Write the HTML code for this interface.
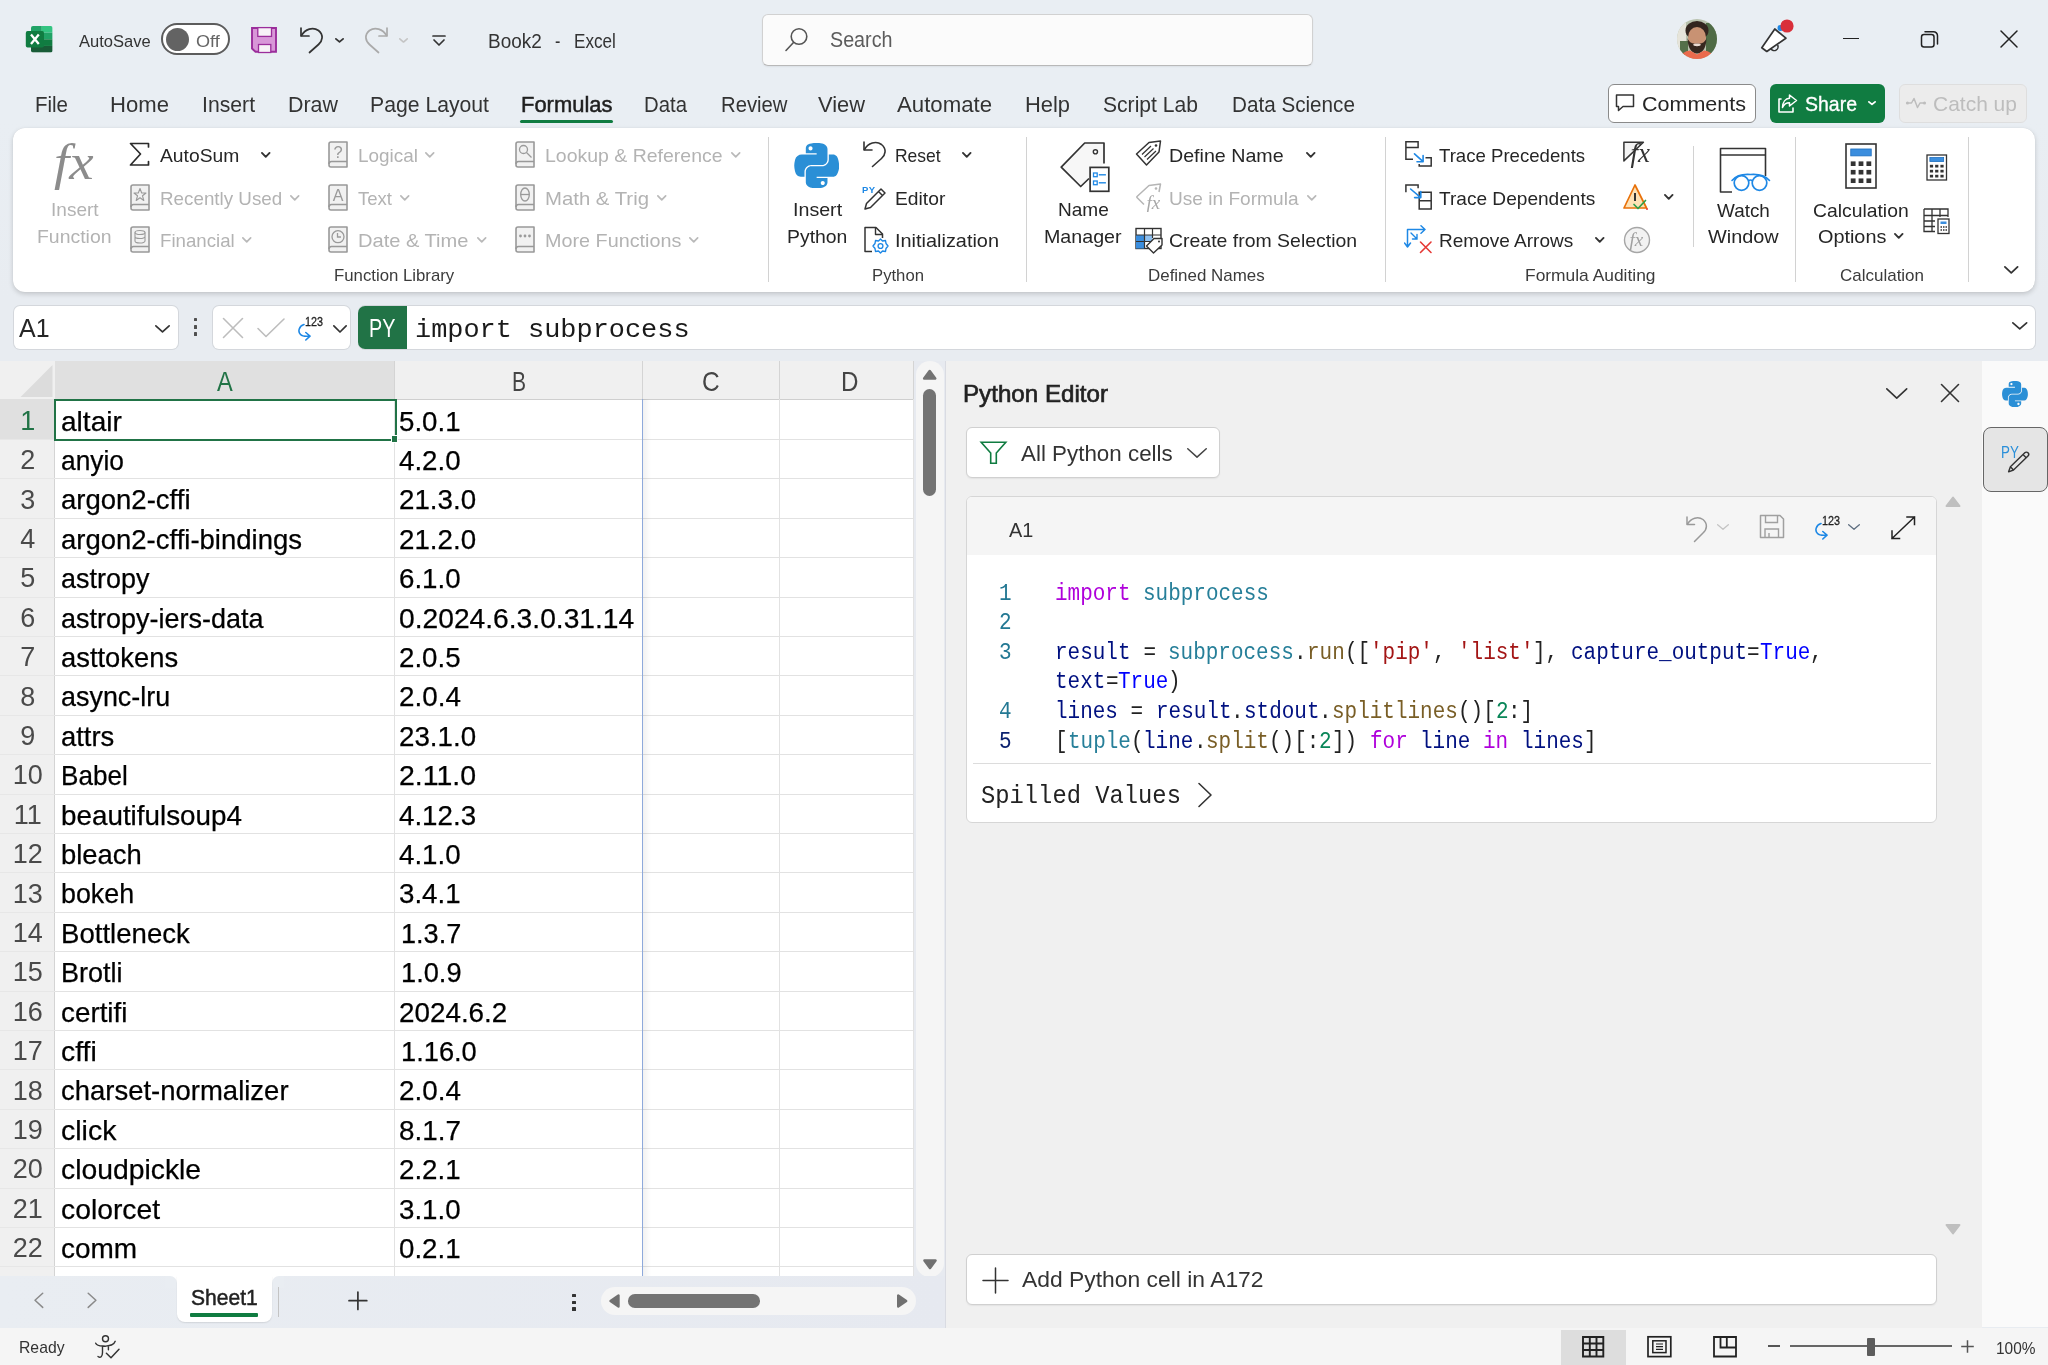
<!DOCTYPE html>
<html lang="en"><head><meta charset="utf-8"><title>Book2 - Excel</title>
<style>
html,body{margin:0;padding:0;}
body{width:2048px;height:1365px;overflow:hidden;position:relative;background:linear-gradient(to bottom,#e9eef3 0,#e9eef3 120px,#e8ecf1 300px,#e8ecf1 100%);font-family:"Liberation Sans",sans-serif;}
.b{position:absolute;box-sizing:border-box;display:block;}
.t{position:absolute;white-space:pre;line-height:1;transform-origin:0 0;display:block;}
</style></head><body><div class="b" style="left:0;top:0;width:2048px;height:1365px;will-change:transform;">
<svg class="b" style="left:25px;top:25px;" width="29" height="29" viewBox="0 0 29 29" fill="none"><defs><clipPath id="xl"><rect x="6" y="1" width="21.600" height="26.600" rx="2"/></clipPath></defs>
<g clip-path="url(#xl)"><rect x="6" y="1" width="10.800" height="6.650" fill="#21a366"/><rect x="16.800" y="1" width="10.800" height="6.650" fill="#33c481"/>
<rect x="6" y="7.650" width="10.800" height="6.650" fill="#107c41"/><rect x="16.800" y="7.650" width="10.800" height="6.650" fill="#21a366"/>
<rect x="6" y="14.300" width="10.800" height="6.650" fill="#185c37"/><rect x="16.800" y="14.300" width="10.800" height="6.650" fill="#107c41"/>
<rect x="6" y="20.950" width="21.600" height="6.650" fill="#185c37"/></g>
<rect x="0.800" y="6.100" width="18.200" height="16.400" rx="1.800" fill="#107c41"/>
<path d="M6 9.600 L13.800 19 M13.800 9.600 L6 19" stroke="#fff" stroke-width="2.300"/></svg>
<span class="t" style="left:79.00px;top:33.24px;font-size:17.2px;color:#333;transform:scaleX(0.9616);">AutoSave</span>
<div class="b" style="left:161px;top:23.2px;width:68.6px;height:31.8px;background:#fff;border:2px solid #5c5c5c;border-radius:16px;"></div>
<div class="b" style="left:165.8px;top:27.8px;width:23px;height:23px;background:#636363;border-radius:50%;"></div>
<span class="t" style="left:195.80px;top:33.24px;font-size:17.2px;color:#666;transform:scaleX(1.0527);">Off</span>
<svg class="b" style="left:250.2px;top:26.3px;" width="28" height="28" viewBox="0 0 28 28" fill="none"><path d="M2 2 H26 V25.800 H5.500 L2 22.500 Z" fill="#d897d8" stroke="#9b2d9b" stroke-width="1.900" stroke-linejoin="miter"/>
<rect x="7.800" y="1.600" width="13.700" height="8.800" fill="#f7f2f7" stroke="#9b2d9b" stroke-width="1.300"/>
<rect x="8.500" y="18.500" width="12.300" height="8" fill="#f7f2f7" stroke="#9b2d9b" stroke-width="1.300"/></svg>
<svg class="b" style="left:298px;top:25px;" width="28" height="30" viewBox="0 0 28 30" fill="none"><path d="M3 3 V11 H11" stroke="#333" stroke-width="1.700" stroke-linecap="round" stroke-linejoin="round"/>
<path d="M3.500 10.500 C7 4 15 1.500 20.500 5.500 C26 10 24.500 16 20.500 19.500 L11.500 27.500" stroke="#333" stroke-width="1.700" stroke-linecap="round" stroke-linejoin="round"/></svg>
<svg class="b" style="left:333px;top:35.5px;" width="13" height="9.0" viewBox="0 0 13 9.0" fill="none"><path d="M2.90 2.90 L6.50 5.92 L10.10 2.90" stroke="#333" stroke-width="1.8" stroke-linecap="round" stroke-linejoin="round"/></svg>
<svg class="b" style="left:362px;top:25px;" width="28" height="30" viewBox="0 0 28 30" fill="none"><path d="M25 3 V11 H17" stroke="#aaa" stroke-width="1.700" stroke-linecap="round" stroke-linejoin="round"/>
<path d="M24.500 10.500 C21 4 13 1.500 7.500 5.500 C2 10 3.500 16 7.500 19.500 L16.500 27.500" stroke="#aaa" stroke-width="1.700" stroke-linecap="round" stroke-linejoin="round"/></svg>
<svg class="b" style="left:397px;top:35.5px;" width="13" height="9.0" viewBox="0 0 13 9.0" fill="none"><path d="M2.80 2.80 L6.50 6.04 L10.20 2.80" stroke="#c4c4c4" stroke-width="1.6" stroke-linecap="round" stroke-linejoin="round"/></svg>
<svg class="b" style="left:430px;top:33px;" width="18" height="14" viewBox="0 0 18 14" fill="none"><path d="M3 3 H15" stroke="#333" stroke-width="1.700" stroke-linecap="round"/><path d="M4 7 L9 12 L14 7" stroke="#333" stroke-width="1.700" stroke-linecap="round" stroke-linejoin="round"/></svg>
<span class="t" style="left:488.00px;top:30.57px;font-size:20px;color:#333;transform:scaleX(0.9471);">Book2</span>
<span class="t" style="left:555.30px;top:30.57px;font-size:20px;color:#333;transform:scaleX(0.8060);">-</span>
<span class="t" style="left:574.30px;top:30.57px;font-size:20px;color:#333;transform:scaleX(0.8569);">Excel</span>
<div class="b" style="left:762px;top:14px;width:551px;height:52px;background:#fbfbfb;border:1px solid #d1d1d1;border-bottom-color:#b8b8b8;border-radius:6px;box-shadow:0 1px 2px rgba(0,0,0,.06);"></div>
<svg class="b" style="left:783px;top:25px;" width="28" height="28" viewBox="0 0 28 28" fill="none"><circle cx="16" cy="11.500" r="7.800" stroke="#555" stroke-width="1.600"/><path d="M10.500 17.500 L3 25.500" stroke="#555" stroke-width="1.600" stroke-linecap="round"/></svg>
<span class="t" style="left:830.00px;top:28.88px;font-size:22px;color:#5c5c5c;transform:scaleX(0.8962);">Search</span>
<svg class="b" style="left:1677px;top:19px;" width="40" height="40" viewBox="0 0 40 40" fill="none"><defs><clipPath id="av"><circle cx="20" cy="20" r="20"/></clipPath></defs>
<g clip-path="url(#av)"><rect width="40" height="40" fill="#b9c2ae"/>
<rect x="0" y="0" width="9" height="40" fill="#e6e4da"/><rect x="29" y="4" width="11" height="30" fill="#4f6b45"/><rect x="3" y="22" width="8" height="14" fill="#55704a"/>
<ellipse cx="20" cy="11.500" rx="11.500" ry="9.500" fill="#33251f"/>
<ellipse cx="20" cy="18.500" rx="9" ry="10.500" fill="#c89273"/>
<path d="M10.500 19 Q11 34 20 34.500 Q29 34 29.500 19 Q27.500 25.500 20 24.500 Q12.500 25.500 10.500 19Z" fill="#37281f"/>
<ellipse cx="20" cy="25.800" rx="3.800" ry="1.400" fill="#eadbd2"/>
<path d="M2 40 Q5 32 13 31.500 L20 35.500 L27 31.500 Q35 32 38 40Z" fill="#ea6a4c"/></g></svg>
<svg class="b" style="left:1758px;top:18px;" width="38" height="38" viewBox="0 0 38 38" fill="none"><path d="M16.800 11 L27.900 20.200 L8.800 33.500 L3.800 29.700 Z" fill="#fff" stroke="#333" stroke-width="1.700" stroke-linejoin="round"/>
<path d="M13 30.600 A3.600 3.600 0 0 0 19.600 27" stroke="#333" stroke-width="1.600"/>
<circle cx="22.500" cy="10" r="3" fill="#1e88e5"/><circle cx="29" cy="8" r="6.600" fill="#d92f3a"/></svg>
<div class="b" style="left:1843px;top:37.5px;width:16px;height:1.6px;background:#222;"></div>
<svg class="b" style="left:1920px;top:30px;" width="20" height="19" viewBox="0 0 20 19" fill="none"><rect x="1.500" y="4.500" width="12.500" height="12.500" rx="2.500" stroke="#222" stroke-width="1.500"/><path d="M5 1.700 H13.500 A4 4 0 0 1 17.500 5.700 V14" stroke="#222" stroke-width="1.500" stroke-linecap="round"/></svg>
<svg class="b" style="left:1999px;top:29px;" width="20" height="20" viewBox="0 0 20 20" fill="none"><path d="M2 2 L18 18 M18 2 L2 18" stroke="#222" stroke-width="1.500" stroke-linecap="round"/></svg>
<span class="t" style="left:35.00px;top:94.05px;font-size:21.8px;color:#333;transform:scaleX(0.9402);">File</span>
<span class="t" style="left:110.00px;top:94.05px;font-size:21.8px;color:#333;transform:scaleX(1.0136);">Home</span>
<span class="t" style="left:202.00px;top:94.05px;font-size:21.8px;color:#333;transform:scaleX(0.9725);">Insert</span>
<span class="t" style="left:288.00px;top:94.05px;font-size:21.8px;color:#333;transform:scaleX(0.9823);">Draw</span>
<span class="t" style="left:370.00px;top:94.05px;font-size:21.8px;color:#333;transform:scaleX(0.9722);">Page Layout</span>
<span class="t" style="left:644.00px;top:94.05px;font-size:21.8px;color:#333;transform:scaleX(0.9326);">Data</span>
<span class="t" style="left:720.50px;top:94.05px;font-size:21.8px;color:#333;transform:scaleX(0.9300);">Review</span>
<span class="t" style="left:818.00px;top:94.05px;font-size:21.8px;color:#333;transform:scaleX(1.0028);">View</span>
<span class="t" style="left:897.00px;top:94.05px;font-size:21.8px;color:#333;transform:scaleX(1.0182);">Automate</span>
<span class="t" style="left:1025.00px;top:94.05px;font-size:21.8px;color:#333;transform:scaleX(1.0045);">Help</span>
<span class="t" style="left:1103.00px;top:94.05px;font-size:21.8px;color:#333;transform:scaleX(0.9673);">Script Lab</span>
<span class="t" style="left:1232.00px;top:94.05px;font-size:21.8px;color:#333;transform:scaleX(0.9483);">Data Science</span>
<span class="t" style="left:521.00px;top:94.05px;font-size:21.8px;color:#1f1f1f;transform:scaleX(1.0065);-webkit-text-stroke:0.5px #1f1f1f;">Formulas</span>
<div class="b" style="left:520px;top:119.5px;width:93px;height:3.4px;background:#107c41;border-radius:2px;"></div>
<div class="b" style="left:1608px;top:84px;width:148px;height:38.5px;background:#fff;border:1px solid #8a8a8a;border-radius:6px;"></div>
<svg class="b" style="left:1614px;top:92px;" width="22" height="22" viewBox="0 0 22 22" fill="none"><path d="M2.500 3 H19.500 V14.500 H9 L4.500 18.500 V14.500 H2.500 Z" stroke="#333" stroke-width="1.500" stroke-linejoin="round"/></svg>
<span class="t" style="left:1642.00px;top:93.02px;font-size:21px;color:#262626;transform:scaleX(1.0243);">Comments</span>
<div class="b" style="left:1770px;top:84px;width:115px;height:39px;background:#107c41;border-radius:6px;"></div>
<svg class="b" style="left:1776px;top:92px;" width="23" height="23" viewBox="0 0 23 23" fill="none"><path d="M5 7 H3 V20 H17 V16" stroke="#fff" stroke-width="1.600" stroke-linejoin="round" stroke-linecap="round"/>
<path d="M13.500 3 L20.500 8.500 L13.500 14 V10.800 C10 10.800 7.800 12.500 6.500 15.500 C6.700 10 9.500 6.500 13.500 6.300 Z" stroke="#fff" stroke-width="1.500" stroke-linejoin="round"/></svg>
<span class="t" style="left:1805.00px;top:93.02px;font-size:21px;color:#fff;transform:scaleX(0.9274);-webkit-text-stroke:0.35px #fff;">Share</span>
<svg class="b" style="left:1866.3px;top:98.8px;" width="12.0" height="8.5" viewBox="0 0 12.0 8.5" fill="none"><path d="M2.90 2.90 L6.00 5.42 L9.10 2.90" stroke="#fff" stroke-width="1.8" stroke-linecap="round" stroke-linejoin="round"/></svg>
<div class="b" style="left:1898.5px;top:84px;width:128.5px;height:38.5px;background:#ececec;border:1px solid #dedede;border-radius:6px;"></div>
<svg class="b" style="left:1904px;top:94px;" width="24" height="18" viewBox="0 0 24 18" fill="none"><circle cx="3.500" cy="9" r="1.600" fill="#bdbdbd"/><circle cx="20.500" cy="9" r="1.600" fill="#bdbdbd"/><path d="M5 9 H7.500 L10 4.500 L13.500 13.500 L16 9 H19" stroke="#bdbdbd" stroke-width="1.500" stroke-linejoin="round" stroke-linecap="round"/></svg>
<span class="t" style="left:1933.00px;top:93.02px;font-size:21px;color:#bdbdbd;transform:scaleX(0.9988);">Catch up</span>
<div class="b" style="left:13px;top:128px;width:2022px;height:164px;background:#fff;border-radius:12px;box-shadow:0 2px 5px rgba(0,0,0,.17),0 0 1px rgba(0,0,0,.12);"></div>
<div class="b" style="left:768.2px;top:137px;width:1.2px;height:145px;background:#d2d2d2;"></div>
<div class="b" style="left:1025.7px;top:137px;width:1.2px;height:145px;background:#d2d2d2;"></div>
<div class="b" style="left:1384.5px;top:137px;width:1.2px;height:145px;background:#d2d2d2;"></div>
<div class="b" style="left:1794.7px;top:137px;width:1.2px;height:145px;background:#d2d2d2;"></div>
<div class="b" style="left:1968.2px;top:137px;width:1.2px;height:145px;background:#d2d2d2;"></div>
<div class="b" style="left:1693.3px;top:146px;width:1.2px;height:101px;background:#d2d2d2;"></div>
<span class="t" style="left:334.00px;top:268.15px;font-size:16.6px;color:#3b3b3b;transform:scaleX(1.0107);">Function Library</span>
<span class="t" style="left:872.00px;top:268.15px;font-size:16.6px;color:#3b3b3b;transform:scaleX(1.0056);">Python</span>
<span class="t" style="left:1148.00px;top:268.15px;font-size:16.6px;color:#3b3b3b;transform:scaleX(1.0203);">Defined Names</span>
<span class="t" style="left:1525.00px;top:268.15px;font-size:16.6px;color:#3b3b3b;transform:scaleX(1.0483);">Formula Auditing</span>
<span class="t" style="left:1840.00px;top:268.15px;font-size:16.6px;color:#3b3b3b;transform:scaleX(1.0233);">Calculation</span>
<span class="t" style="left:54.00px;top:137.12px;font-size:50px;color:#8c8c8c;transform:scaleX(1.0972);font-style:italic;font-family:'Liberation Serif',serif;">fx</span>
<span class="t" style="left:50.80px;top:200.22px;font-size:19px;color:#b3b3b3;transform:scaleX(1.0021);">Insert</span>
<span class="t" style="left:36.70px;top:226.72px;font-size:19px;color:#b3b3b3;transform:scaleX(1.0224);">Function</span>
<svg class="b" style="left:128px;top:141px;" width="24" height="27" viewBox="0 0 24 27" fill="none"><path d="M20.500 6 V2.500 H2.500 L12.500 13 L2.500 24 H20.500 V20.500" stroke="#2b2b2b" stroke-width="1.700" stroke-linejoin="round" stroke-linecap="round"/></svg>
<span class="t" style="left:159.70px;top:146.02px;font-size:19px;color:#262626;transform:scaleX(1.0143);">AutoSum</span>
<svg class="b" style="left:258.8px;top:149.8px;" width="13.5" height="10.0" viewBox="0 0 13.5 10.0" fill="none"><path d="M2.95 2.95 L6.75 6.86 L10.55 2.95" stroke="#333" stroke-width="1.9" stroke-linecap="round" stroke-linejoin="round"/></svg>
<svg class="b" style="left:129.5px;top:183.5px;" width="20" height="27" viewBox="0 0 20 27" fill="none"><path d="M1 3 Q1 1 3 1 H19 V26 H3 Q1 26 1 24 Z" fill="#f1f1f1" stroke="#999" stroke-width="1.600" stroke-linejoin="round"/>
<path d="M1 23 Q1 20.500 3.500 20.500 H19" stroke="#999" stroke-width="1.600"/><path d="M10 4.500 L11.700 9 H16 L12.500 11.800 L13.800 16.500 L10 13.700 L6.200 16.500 L7.500 11.800 L4 9 H8.300 Z" stroke="#9a9a9a" stroke-width="1.100" stroke-linejoin="round"/></svg>
<span class="t" style="left:159.70px;top:188.72px;font-size:19px;color:#b3b3b3;transform:scaleX(0.9895);">Recently Used</span>
<svg class="b" style="left:287.7px;top:192.60000000000002px;" width="13.5" height="9.799999999999983" viewBox="0 0 13.5 9.799999999999983" fill="none"><path d="M2.85 2.85 L6.75 6.78 L10.65 2.85" stroke="#b9b9b9" stroke-width="1.7" stroke-linecap="round" stroke-linejoin="round"/></svg>
<svg class="b" style="left:129.5px;top:226.2px;" width="20" height="27" viewBox="0 0 20 27" fill="none"><path d="M1 3 Q1 1 3 1 H19 V26 H3 Q1 26 1 24 Z" fill="#f1f1f1" stroke="#999" stroke-width="1.600" stroke-linejoin="round"/>
<path d="M1 23 Q1 20.500 3.500 20.500 H19" stroke="#999" stroke-width="1.600"/><ellipse cx="10" cy="6.500" rx="5" ry="2" stroke="#9a9a9a" stroke-width="1.100"/><path d="M5 6.500 V15 A5 2 0 0 0 15 15 V6.500 M5 10.500 A5 2 0 0 0 15 10.500" stroke="#9a9a9a" stroke-width="1.100"/></svg>
<span class="t" style="left:159.70px;top:231.32px;font-size:19px;color:#b3b3b3;transform:scaleX(0.9829);">Financial</span>
<svg class="b" style="left:240.2px;top:235.20000000000002px;" width="13.5" height="9.799999999999983" viewBox="0 0 13.5 9.799999999999983" fill="none"><path d="M2.85 2.85 L6.75 6.78 L10.65 2.85" stroke="#b9b9b9" stroke-width="1.7" stroke-linecap="round" stroke-linejoin="round"/></svg>
<svg class="b" style="left:328px;top:141px;" width="20" height="27" viewBox="0 0 20 27" fill="none"><path d="M1 3 Q1 1 3 1 H19 V26 H3 Q1 26 1 24 Z" fill="#f1f1f1" stroke="#999" stroke-width="1.600" stroke-linejoin="round"/>
<path d="M1 23 Q1 20.500 3.500 20.500 H19" stroke="#999" stroke-width="1.600"/><text x="10" y="16.500" font-size="16.500" text-anchor="middle" fill="#9a9a9a" font-family="Liberation Sans,sans-serif">?</text></svg>
<span class="t" style="left:358.00px;top:146.02px;font-size:19px;color:#b3b3b3;transform:scaleX(0.9962);">Logical</span>
<svg class="b" style="left:423.4px;top:149.9px;" width="13.5" height="9.799999999999983" viewBox="0 0 13.5 9.799999999999983" fill="none"><path d="M2.85 2.85 L6.75 6.78 L10.65 2.85" stroke="#b9b9b9" stroke-width="1.7" stroke-linecap="round" stroke-linejoin="round"/></svg>
<svg class="b" style="left:328px;top:183.5px;" width="20" height="27" viewBox="0 0 20 27" fill="none"><path d="M1 3 Q1 1 3 1 H19 V26 H3 Q1 26 1 24 Z" fill="#f1f1f1" stroke="#999" stroke-width="1.600" stroke-linejoin="round"/>
<path d="M1 23 Q1 20.500 3.500 20.500 H19" stroke="#999" stroke-width="1.600"/><text x="10" y="16.500" font-size="16" text-anchor="middle" fill="#9a9a9a" font-family="Liberation Sans,sans-serif">A</text></svg>
<span class="t" style="left:358.00px;top:188.72px;font-size:19px;color:#b3b3b3;transform:scaleX(0.9752);">Text</span>
<svg class="b" style="left:398.3px;top:192.60000000000002px;" width="13.5" height="9.799999999999983" viewBox="0 0 13.5 9.799999999999983" fill="none"><path d="M2.85 2.85 L6.75 6.78 L10.65 2.85" stroke="#b9b9b9" stroke-width="1.7" stroke-linecap="round" stroke-linejoin="round"/></svg>
<svg class="b" style="left:328px;top:226.2px;" width="20" height="27" viewBox="0 0 20 27" fill="none"><path d="M1 3 Q1 1 3 1 H19 V26 H3 Q1 26 1 24 Z" fill="#f1f1f1" stroke="#999" stroke-width="1.600" stroke-linejoin="round"/>
<path d="M1 23 Q1 20.500 3.500 20.500 H19" stroke="#999" stroke-width="1.600"/><circle cx="10" cy="10.700" r="6" stroke="#9a9a9a" stroke-width="1.300"/><path d="M9.500 7 V11 H13" stroke="#9a9a9a" stroke-width="1.300"/></svg>
<span class="t" style="left:358.00px;top:231.32px;font-size:19px;color:#b3b3b3;transform:scaleX(1.0565);">Date &amp; Time</span>
<svg class="b" style="left:474.5px;top:235.20000000000002px;" width="13.5" height="9.799999999999983" viewBox="0 0 13.5 9.799999999999983" fill="none"><path d="M2.85 2.85 L6.75 6.78 L10.65 2.85" stroke="#b9b9b9" stroke-width="1.7" stroke-linecap="round" stroke-linejoin="round"/></svg>
<svg class="b" style="left:514.8px;top:141px;" width="20" height="27" viewBox="0 0 20 27" fill="none"><path d="M1 3 Q1 1 3 1 H19 V26 H3 Q1 26 1 24 Z" fill="#f1f1f1" stroke="#999" stroke-width="1.600" stroke-linejoin="round"/>
<path d="M1 23 Q1 20.500 3.500 20.500 H19" stroke="#999" stroke-width="1.600"/><circle cx="8.500" cy="8.500" r="4" stroke="#9a9a9a" stroke-width="1.300"/><path d="M11.500 11.500 L16.500 16.500" stroke="#9a9a9a" stroke-width="1.300"/></svg>
<span class="t" style="left:545.30px;top:146.02px;font-size:19px;color:#b3b3b3;transform:scaleX(1.0249);">Lookup &amp; Reference</span>
<svg class="b" style="left:728.7px;top:149.9px;" width="13.5" height="9.799999999999983" viewBox="0 0 13.5 9.799999999999983" fill="none"><path d="M2.85 2.85 L6.75 6.78 L10.65 2.85" stroke="#b9b9b9" stroke-width="1.7" stroke-linecap="round" stroke-linejoin="round"/></svg>
<svg class="b" style="left:514.8px;top:183.5px;" width="20" height="27" viewBox="0 0 20 27" fill="none"><path d="M1 3 Q1 1 3 1 H19 V26 H3 Q1 26 1 24 Z" fill="#f1f1f1" stroke="#999" stroke-width="1.600" stroke-linejoin="round"/>
<path d="M1 23 Q1 20.500 3.500 20.500 H19" stroke="#999" stroke-width="1.600"/><ellipse cx="10" cy="10.500" rx="4.300" ry="6.500" stroke="#9a9a9a" stroke-width="1.300"/><path d="M5.700 10.500 H14.300" stroke="#9a9a9a" stroke-width="1.300"/></svg>
<span class="t" style="left:545.30px;top:188.72px;font-size:19px;color:#b3b3b3;transform:scaleX(1.0701);">Math &amp; Trig</span>
<svg class="b" style="left:655.4000000000001px;top:192.60000000000002px;" width="13.5" height="9.799999999999983" viewBox="0 0 13.5 9.799999999999983" fill="none"><path d="M2.85 2.85 L6.75 6.78 L10.65 2.85" stroke="#b9b9b9" stroke-width="1.7" stroke-linecap="round" stroke-linejoin="round"/></svg>
<svg class="b" style="left:514.8px;top:226.2px;" width="20" height="27" viewBox="0 0 20 27" fill="none"><path d="M1 3 Q1 1 3 1 H19 V26 H3 Q1 26 1 24 Z" fill="#f1f1f1" stroke="#999" stroke-width="1.600" stroke-linejoin="round"/>
<path d="M1 23 Q1 20.500 3.500 20.500 H19" stroke="#999" stroke-width="1.600"/><circle cx="5.500" cy="10" r="1.400" fill="#9a9a9a"/><circle cx="10" cy="10" r="1.400" fill="#9a9a9a"/><circle cx="14.500" cy="10" r="1.400" fill="#9a9a9a"/></svg>
<span class="t" style="left:545.30px;top:231.32px;font-size:19px;color:#b3b3b3;transform:scaleX(1.0412);">More Functions</span>
<svg class="b" style="left:686.7px;top:235.20000000000002px;" width="13.5" height="9.799999999999983" viewBox="0 0 13.5 9.799999999999983" fill="none"><path d="M2.85 2.85 L6.75 6.78 L10.65 2.85" stroke="#b9b9b9" stroke-width="1.7" stroke-linecap="round" stroke-linejoin="round"/></svg>
<svg class="b" style="left:793.5px;top:142.5px;" width="45.5" height="45.5" viewBox="0 0 111.500 112.500" fill="none"><path d="M54.900 0 C50.300 0 46 .400 42.100 1.100 C30.800 3.100 28.700 7.300 28.700 15 V25.200 H55.500 V28.600 H18.700 C10.900 28.600 4.100 33.300 2 42.200 C-.500 52.500 -.600 58.900 2 69.700 C3.900 77.600 8.400 83.300 16.200 83.300 H25.400 V71 C25.400 62.100 33.100 54.300 42.200 54.300 H68.900 C76.400 54.300 82.300 48.100 82.300 40.700 V15 C82.300 7.700 76.200 2.300 68.900 1.100 C64.300 .300 59.500 0 54.900 0 Z M40.400 8.200 C43.200 8.200 45.400 10.500 45.400 13.300 C45.400 16.100 43.200 18.300 40.400 18.300 C37.600 18.300 35.400 16.100 35.400 13.300 C35.400 10.500 37.600 8.200 40.400 8.200 Z" fill="#2a8fd6"/>
<path d="M85.600 28.600 V40.600 C85.600 49.900 77.700 57.700 68.800 57.700 H42.100 C34.800 57.700 28.700 64 28.700 71.300 V97 C28.700 104.300 35 108.600 42.100 110.700 C50.600 113.200 58.800 113.700 68.900 110.700 C75.600 108.700 82.300 104.800 82.300 97 V86.800 H55.500 V83.400 H95.700 C103.500 83.400 106.400 78 109.100 69.800 C111.900 61.400 111.800 53.300 109.100 42.300 C107.200 34.500 103.500 28.700 95.700 28.700 Z M70.600 93.700 C73.400 93.700 75.600 95.900 75.600 98.700 C75.600 101.500 73.400 103.800 70.600 103.800 C67.800 103.800 65.600 101.500 65.600 98.700 C65.600 95.900 67.800 93.700 70.600 93.700 Z" fill="#2a8fd6"/></svg>
<span class="t" style="left:792.80px;top:200.22px;font-size:19px;color:#262626;transform:scaleX(1.0337);">Insert</span>
<span class="t" style="left:786.50px;top:226.52px;font-size:19px;color:#262626;transform:scaleX(1.0205);">Python</span>
<svg class="b" style="left:861px;top:139px;" width="28" height="30" viewBox="0 0 28 30" fill="none"><path d="M3 3 V11 H11" stroke="#333" stroke-width="1.600" stroke-linecap="round" stroke-linejoin="round"/>
<path d="M3.500 10.500 C7 4 15 1.500 20.500 5.500 C26 10 24.500 16 20.500 19.500 L11.500 27.500" stroke="#333" stroke-width="1.600" stroke-linecap="round" stroke-linejoin="round"/></svg>
<span class="t" style="left:895.00px;top:146.02px;font-size:19px;color:#262626;transform:scaleX(0.9195);">Reset</span>
<svg class="b" style="left:960px;top:149.8px;" width="13.5" height="10.0" viewBox="0 0 13.5 10.0" fill="none"><path d="M2.95 2.95 L6.75 6.86 L10.55 2.95" stroke="#333" stroke-width="1.9" stroke-linecap="round" stroke-linejoin="round"/></svg>
<svg class="b" style="left:862px;top:184px;" width="27" height="27" viewBox="0 0 27 27" fill="none"><text x="0" y="9" font-size="9.500" font-weight="700" fill="#1e88e5" font-family="Liberation Sans,sans-serif" letter-spacing="0.500">PY</text>
<path d="M19 5 L23 9 L8.500 23.500 L3 25 L4.500 19.500 Z M16.500 7.500 L20.500 11.500" stroke="#333" stroke-width="1.500" stroke-linejoin="round"/></svg>
<span class="t" style="left:895.00px;top:188.72px;font-size:19px;color:#262626;transform:scaleX(1.0143);">Editor</span>
<svg class="b" style="left:863px;top:226px;" width="26" height="28" viewBox="0 0 26 28" fill="none"><path d="M9 25.500 H2 V1.500 H13 L19.500 8 V12" stroke="#333" stroke-width="1.500" stroke-linejoin="round"/><path d="M12.500 1.500 V8.500 H19.500" stroke="#333" stroke-width="1.400" stroke-linejoin="round"/>
<g transform="translate(17.500 20)"><circle r="2.400" stroke="#1e88e5" stroke-width="1.400"/><path d="M0 -7 L2 -5 L5 -5.500 L5.500 -2.500 L7.500 0 L5.500 2.500 L5 5.500 L2 5 L0 7 L-2 5 L-5 5.500 L-5.500 2.500 L-7.500 0 L-5.500 -2.500 L-5 -5.500 L-2 -5 Z" stroke="#1e88e5" stroke-width="1.400" stroke-linejoin="round"/></g></svg>
<span class="t" style="left:895.00px;top:231.32px;font-size:19px;color:#262626;transform:scaleX(1.0476);">Initialization</span>
<svg class="b" style="left:1058px;top:140px;" width="54" height="54" viewBox="0 0 54 54" fill="none"><path d="M46 23.500 V3 H26.700 L3.200 27.200 L22.700 46.500 L31 38.500" fill="#f7f7f7" stroke="#333" stroke-width="1.700" stroke-linejoin="round"/>
<circle cx="37.400" cy="11.800" r="2.100" fill="#fff" stroke="#333" stroke-width="1.400"/>
<rect x="32.100" y="27.400" width="18.700" height="23.900" fill="#fff" stroke="#333" stroke-width="1.700"/>
<rect x="35.500" y="33" width="3.700" height="3.700" stroke="#1e88e5" stroke-width="1.300"/><path d="M40.800 34.800 H47.900" stroke="#1e88e5" stroke-width="1.400"/>
<rect x="35.500" y="41" width="3.700" height="3.700" stroke="#1e88e5" stroke-width="1.300"/><path d="M40.800 42.800 H47.900" stroke="#1e88e5" stroke-width="1.400"/></svg>
<span class="t" style="left:1057.50px;top:200.22px;font-size:19px;color:#262626;transform:scaleX(1.0034);">Name</span>
<span class="t" style="left:1044.40px;top:226.52px;font-size:19px;color:#262626;transform:scaleX(1.0340);">Manager</span>
<svg class="b" style="left:1134px;top:139px;" width="30" height="28" viewBox="0 0 30 28" fill="none"><path d="M2.500 15 L15 3.500 L26.500 2 L25 13 L12.500 26 Z" stroke="#333" stroke-width="1.500" stroke-linejoin="round"/><circle cx="22" cy="6.500" r="1.300" fill="#333"/>
<path d="M8 15.500 L17 7 M10.500 18 L19.500 9.500 M13 20.500 L22 12" stroke="#333" stroke-width="1.200"/></svg>
<span class="t" style="left:1169.40px;top:146.02px;font-size:19px;color:#262626;transform:scaleX(1.0337);">Define Name</span>
<svg class="b" style="left:1304px;top:149.8px;" width="13.5" height="10.0" viewBox="0 0 13.5 10.0" fill="none"><path d="M2.95 2.95 L6.75 6.86 L10.55 2.95" stroke="#333" stroke-width="1.9" stroke-linecap="round" stroke-linejoin="round"/></svg>
<svg class="b" style="left:1134px;top:182px;" width="30" height="30" viewBox="0 0 30 30" fill="none"><path d="M2.500 15 L15 3.500 L26.500 2 L25 10" stroke="#b5b5b5" stroke-width="1.500" stroke-linejoin="round"/><path d="M2.500 15 L10 22.500" stroke="#b5b5b5" stroke-width="1.500"/><circle cx="22" cy="6.500" r="1.300" fill="#b5b5b5"/>
<text x="12.500" y="27" font-size="19" font-style="italic" fill="#a8a8a8" font-family="Liberation Serif,serif">fx</text></svg>
<span class="t" style="left:1169.40px;top:188.72px;font-size:19px;color:#b3b3b3;transform:scaleX(1.0053);">Use in Formula</span>
<svg class="b" style="left:1304.7px;top:192.8px;" width="13.5" height="9.799999999999983" viewBox="0 0 13.5 9.799999999999983" fill="none"><path d="M2.85 2.85 L6.75 6.78 L10.65 2.85" stroke="#b9b9b9" stroke-width="1.7" stroke-linecap="round" stroke-linejoin="round"/></svg>
<svg class="b" style="left:1134px;top:226px;" width="30" height="28" viewBox="0 0 30 28" fill="none"><rect x="2" y="2.500" width="25" height="20" fill="#fff" stroke="#333" stroke-width="1.400"/>
<rect x="2" y="9" width="8.500" height="13.500" fill="#3b8ede"/><rect x="10.500" y="9" width="8" height="6.500" fill="#8ec1f2"/>
<path d="M2 9 H27 M2 15.500 H19 M10.500 2.500 V22.500 M18.500 2.500 V12" stroke="#333" stroke-width="1.200"/>
<path d="M12.500 20 L20 12.500 H28 V19 L19.500 27 Z" fill="#fff" stroke="#333" stroke-width="1.400" stroke-linejoin="round"/><circle cx="25" cy="15.500" r="1" fill="#333"/></svg>
<span class="t" style="left:1169.40px;top:231.32px;font-size:19px;color:#262626;transform:scaleX(1.0238);">Create from Selection</span>
<svg class="b" style="left:1404px;top:140px;" width="30" height="29" viewBox="0 0 30 29" fill="none"><path d="M1.900 1.700 H14.100 V7.600 H1.900 Z M1.900 7.600 V19.300 H9" stroke="#333" stroke-width="1.500" stroke-linejoin="miter"/>
<path d="M15.200 24 V26 H27.200 V17.800 H21.500" stroke="#333" stroke-width="1.500"/>
<path d="M10.500 13.900 L19.100 21.700 M19.100 15.500 V21.700 H13" stroke="#1e88e5" stroke-width="1.600" stroke-linecap="round" stroke-linejoin="round"/></svg>
<span class="t" style="left:1438.70px;top:146.02px;font-size:19px;color:#262626;transform:scaleX(0.9789);">Trace Precedents</span>
<svg class="b" style="left:1404px;top:183px;" width="30" height="29" viewBox="0 0 30 29" fill="none"><path d="M1.900 9.200 V2.100 H14.100 V5.300" stroke="#333" stroke-width="1.500"/>
<path d="M15.200 9.200 H27.200 V26 H15.200 Z M15.200 17.700 H27.200" stroke="#333" stroke-width="1.500"/>
<path d="M6.600 6 L16.800 14.600 M16.800 8.600 V14.600 H10.600" stroke="#1e88e5" stroke-width="1.600" stroke-linecap="round" stroke-linejoin="round"/></svg>
<span class="t" style="left:1438.70px;top:188.72px;font-size:19px;color:#262626;transform:scaleX(1.0044);">Trace Dependents</span>
<svg class="b" style="left:1404px;top:225px;" width="30" height="30" viewBox="0 0 30 30" fill="none"><path d="M3.500 22 V4.500 H21 M17 .800 L21 4.500 L17 8.200 M.500 18 L3.500 22 L6.500 18" stroke="#1e88e5" stroke-width="1.500" stroke-linecap="round" stroke-linejoin="round"/>
<path d="M7 8 L13 14 M13 9.500 V14 H8.500" stroke="#1e88e5" stroke-width="1.400" stroke-linecap="round"/>
<path d="M16.500 17 L27 27.500 M27 17 L16.500 27.500" stroke="#e53935" stroke-width="1.600" stroke-linecap="round"/></svg>
<span class="t" style="left:1438.70px;top:231.32px;font-size:19px;color:#262626;transform:scaleX(1.0012);">Remove Arrows</span>
<svg class="b" style="left:1592.6px;top:235.3px;" width="13.5" height="10.0" viewBox="0 0 13.5 10.0" fill="none"><path d="M2.95 2.95 L6.75 6.86 L10.55 2.95" stroke="#333" stroke-width="1.9" stroke-linecap="round" stroke-linejoin="round"/></svg>
<svg class="b" style="left:1621px;top:139px;" width="34" height="32" viewBox="0 0 34 32" fill="none"><path d="M2.900 3.200 H22.400 L2.900 21.900 Z" fill="#f3f3f3" stroke="#333" stroke-width="1.500" stroke-linejoin="round"/>
<text x="9.500" y="22.700" font-size="27" font-style="italic" fill="#333" font-family="Liberation Serif,serif">fx</text></svg>
<svg class="b" style="left:1622px;top:182px;" width="30" height="30" viewBox="0 0 30 30" fill="none"><path d="M13 3 L24.500 26 H2 Z" fill="#fde2b6" stroke="#e8710a" stroke-width="1.700" stroke-linejoin="round"/><path d="M13 11 V19" stroke="#333" stroke-width="2"/>
<path d="M12 22.500 L16 26.500 L23.500 18.500" stroke="#2e9e4a" stroke-width="1.700" stroke-linecap="round" stroke-linejoin="round"/><circle cx="25" cy="27" r="1" fill="#e53935"/></svg>
<svg class="b" style="left:1661.8px;top:192.3px;" width="13.5" height="10.0" viewBox="0 0 13.5 10.0" fill="none"><path d="M2.95 2.95 L6.75 6.86 L10.55 2.95" stroke="#333" stroke-width="1.9" stroke-linecap="round" stroke-linejoin="round"/></svg>
<svg class="b" style="left:1622px;top:225px;" width="30" height="30" viewBox="0 0 30 30" fill="none"><circle cx="15" cy="15" r="12.500" fill="#f2f2f2" stroke="#a6a6a6" stroke-width="1.400"/><text x="7.500" y="21" font-size="19" font-style="italic" fill="#a0a0a0" font-family="Liberation Serif,serif">fx</text></svg>
<svg class="b" style="left:1718px;top:146px;" width="54" height="48" viewBox="0 0 54 48" fill="none"><path d="M14 46 H2.500 V2.500 H47.500 V30" stroke="#333" stroke-width="1.600" stroke-linejoin="round"/><path d="M2.500 9 H47.500" stroke="#333" stroke-width="1.500"/>
<circle cx="23.500" cy="37" r="7.300" stroke="#1e88e5" stroke-width="1.700"/><circle cx="41.500" cy="37" r="7.300" stroke="#1e88e5" stroke-width="1.700"/>
<path d="M30.500 35 Q32.500 33 34.500 35 M14 34.500 Q20 27.500 32.500 28.500 Q45 27.500 51.500 34.500" stroke="#1e88e5" stroke-width="1.600" stroke-linecap="round"/></svg>
<span class="t" style="left:1717.00px;top:200.52px;font-size:19px;color:#262626;transform:scaleX(0.9943);">Watch</span>
<span class="t" style="left:1707.80px;top:226.92px;font-size:19px;color:#262626;transform:scaleX(1.0467);">Window</span>
<svg class="b" style="left:1844.5px;top:142.5px;" width="32" height="46" viewBox="0 0 32 46" fill="none"><rect x="1" y="1" width="30" height="44" fill="#fff" stroke="#333" stroke-width="1.6"/><rect x="5.76" y="5.98" width="20.48" height="6.8999999999999995" fill="#3b8ede" stroke="#1e6fc0" stroke-width="0.800"/><rect x="5.76" y="18.400000000000002" width="4.8" height="4.6000000000000005" fill="#333"/><rect x="13.6" y="18.400000000000002" width="4.8" height="4.6000000000000005" fill="#333"/><rect x="21.439999999999998" y="18.400000000000002" width="4.8" height="4.6000000000000005" fill="#333"/><rect x="5.76" y="26.910000000000004" width="4.8" height="4.6000000000000005" fill="#333"/><rect x="13.6" y="26.910000000000004" width="4.8" height="4.6000000000000005" fill="#333"/><rect x="21.439999999999998" y="26.910000000000004" width="4.8" height="4.6000000000000005" fill="#333"/><rect x="5.76" y="35.42" width="4.8" height="4.6000000000000005" fill="#333"/><rect x="13.6" y="35.42" width="4.8" height="4.6000000000000005" fill="#333"/><rect x="21.439999999999998" y="35.42" width="4.8" height="4.6000000000000005" fill="#333"/></svg>
<span class="t" style="left:1812.80px;top:200.52px;font-size:19px;color:#262626;transform:scaleX(1.0175);">Calculation</span>
<span class="t" style="left:1817.70px;top:226.92px;font-size:19px;color:#262626;transform:scaleX(1.0435);">Options</span>
<svg class="b" style="left:1891.5px;top:231.3px;" width="13.5" height="10.0" viewBox="0 0 13.5 10.0" fill="none"><path d="M2.95 2.95 L6.75 6.86 L10.55 2.95" stroke="#333" stroke-width="1.9" stroke-linecap="round" stroke-linejoin="round"/></svg>
<svg class="b" style="left:1926px;top:154px;" width="21.5" height="27" viewBox="0 0 21.5 27" fill="none"><rect x="1" y="1" width="19.5" height="25" fill="#fff" stroke="#333" stroke-width="1.3"/><rect x="3.8699999999999997" y="3.5100000000000002" width="13.76" height="4.05" fill="#3b8ede" stroke="#1e6fc0" stroke-width="0.800"/><rect x="3.8699999999999997" y="10.8" width="3.225" height="2.7" fill="#333"/><rect x="9.1375" y="10.8" width="3.225" height="2.7" fill="#333"/><rect x="14.405" y="10.8" width="3.225" height="2.7" fill="#333"/><rect x="3.8699999999999997" y="15.795000000000002" width="3.225" height="2.7" fill="#333"/><rect x="9.1375" y="15.795000000000002" width="3.225" height="2.7" fill="#333"/><rect x="14.405" y="15.795000000000002" width="3.225" height="2.7" fill="#333"/><rect x="3.8699999999999997" y="20.79" width="3.225" height="2.7" fill="#333"/><rect x="9.1375" y="20.79" width="3.225" height="2.7" fill="#333"/><rect x="14.405" y="20.79" width="3.225" height="2.7" fill="#333"/></svg>
<svg class="b" style="left:1922px;top:207px;" width="29" height="28" viewBox="0 0 29 28" fill="none"><path d="M2 2 H26 V10 M2 2 V24.500 H13 M2 8.500 H26 M2 14 H13 M2 19.500 H13 M10 2 V24.500 M18 2 V10" stroke="#333" stroke-width="1.300"/>
<rect x="16" y="12" width="11" height="14.500" fill="#fff" stroke="#333" stroke-width="1.300"/><rect x="18.500" y="14.500" width="6" height="2.500" fill="#3b8ede"/>
<path d="M18.500 20 H20 M21 20 H22.500 M23.500 20 H25 M18.500 23 H20 M21 23 H22.500 M23.500 23 H25" stroke="#333" stroke-width="1.500"/></svg>
<svg class="b" style="left:2002px;top:263.5px;" width="18.5" height="12.0" viewBox="0 0 18.5 12.0" fill="none"><path d="M2.90 2.90 L9.25 8.92 L15.60 2.90" stroke="#333" stroke-width="1.8" stroke-linecap="round" stroke-linejoin="round"/></svg>
<div class="b" style="left:14px;top:306.3px;width:163.6px;height:42.6px;background:#fff;border-radius:6px;box-shadow:0 0 0 1px rgba(0,0,0,.085);"></div>
<span class="t" style="left:18.80px;top:314.98px;font-size:26.6px;color:#262626;transform:scaleX(0.9391);">A1</span>
<svg class="b" style="left:152.5px;top:323px;" width="19.0" height="12" viewBox="0 0 19.0 12" fill="none"><path d="M2.85 2.85 L9.50 8.98 L16.15 2.85" stroke="#333" stroke-width="1.7" stroke-linecap="round" stroke-linejoin="round"/></svg>
<div class="b" style="left:193.6px;top:317.7px;width:3.6px;height:3.6px;background:#505050;border-radius:0.6px;"></div>
<div class="b" style="left:193.6px;top:325.2px;width:3.6px;height:3.6px;background:#505050;border-radius:0.6px;"></div>
<div class="b" style="left:193.6px;top:332px;width:3.6px;height:3.6px;background:#505050;border-radius:0.6px;"></div>
<div class="b" style="left:213.3px;top:306.3px;width:136.6px;height:42.6px;background:#fff;border-radius:6px;box-shadow:0 0 0 1px rgba(0,0,0,.085);"></div>
<svg class="b" style="left:221.5px;top:316.5px;" width="22" height="22" viewBox="0 0 22 22" fill="none"><path d="M1.500 1.500 L20.500 20.500 M20.500 1.500 L1.500 20.500" stroke="#bdbdbd" stroke-width="1.600" stroke-linecap="round"/></svg>
<svg class="b" style="left:256px;top:317px;" width="30" height="22" viewBox="0 0 30 22" fill="none"><path d="M2 11.500 L10 19.500 L28 2" stroke="#bdbdbd" stroke-width="1.600" stroke-linecap="round" stroke-linejoin="round"/></svg>
<svg class="b" style="left:295.5px;top:314.5px;" width="28.0" height="26.0" viewBox="0 0 28 26" fill="none"><path d="M8 9.500 C3 11 1.500 16.500 4.500 19.500 C6.500 21.500 9.500 21.500 13 21.200 M9.800 17.500 L14 21.200 L9.800 25" stroke="#1e88e5" stroke-width="1.600" stroke-linecap="round" stroke-linejoin="round"/>
<text x="9" y="11.300" font-size="13.200" fill="#222" stroke="#222" stroke-width="0.300" font-family="Liberation Sans,sans-serif" textLength="18" lengthAdjust="spacingAndGlyphs">123</text></svg>
<svg class="b" style="left:331px;top:322.5px;" width="18" height="12.0" viewBox="0 0 18 12.0" fill="none"><path d="M2.85 2.85 L9.00 8.98 L15.15 2.85" stroke="#333" stroke-width="1.7" stroke-linecap="round" stroke-linejoin="round"/></svg>
<div class="b" style="left:359px;top:306.3px;width:1676px;height:42.6px;background:#fff;border-radius:6px;box-shadow:0 0 0 1px rgba(0,0,0,.085);"></div>
<div class="b" style="left:358.3px;top:305.6px;width:48.7px;height:43.4px;background:#217346;border-radius:7px 0 0 7px;"></div>
<span class="t" style="left:369.20px;top:315.49px;font-size:26px;color:#fff;transform:scaleX(0.7606);">PY</span>
<span class="t" style="left:415.00px;top:317.19px;font-size:26.5px;color:#1a1a1a;transform:scaleX(1.0155);font-family:'Liberation Mono',monospace;">import subprocess</span>
<svg class="b" style="left:2009.5px;top:320px;" width="19.5" height="12" viewBox="0 0 19.5 12" fill="none"><path d="M2.85 2.85 L9.75 8.98 L16.65 2.85" stroke="#333" stroke-width="1.7" stroke-linecap="round" stroke-linejoin="round"/></svg>
<div class="b" style="left:0px;top:361px;width:946px;height:915px;background:#fff;"></div>
<div class="b" style="left:0px;top:361px;width:913.5px;height:39.3px;background:#f0f0f0;border-bottom:1px solid #cfcfcf;"></div>
<div class="b" style="left:55.4px;top:361px;width:339.2px;height:38.3px;background:#e0e0e0;"></div>
<div class="b" style="left:0px;top:399px;width:55.4px;height:877px;background:#f0f0f0;border-right:1px solid #d4d4d4;"></div>
<div class="b" style="left:0px;top:399px;width:55.4px;height:41px;background:#e0e0e0;"></div>
<svg class="b" style="left:18px;top:363px;" width="36" height="35" viewBox="0 0 36 35" fill="none"><path d="M34.500 2 V34 H2.600 Z" fill="#dcdcdc"/></svg>
<div class="b" style="left:394.1px;top:361px;width:1px;height:38.3px;background:#d4d4d4;"></div>
<div class="b" style="left:642.0px;top:361px;width:1px;height:38.3px;background:#d4d4d4;"></div>
<div class="b" style="left:779.3px;top:361px;width:1px;height:38.3px;background:#d4d4d4;"></div>
<div class="b" style="left:913.0px;top:361px;width:1px;height:38.3px;background:#d4d4d4;"></div>
<div class="b" style="left:55px;top:438.5px;width:858.5px;height:1px;background:#e2e2e2;"></div>
<div class="b" style="left:0px;top:438.5px;width:55px;height:1px;background:#e7e7e7;"></div>
<div class="b" style="left:55px;top:477.5px;width:858.5px;height:1px;background:#e2e2e2;"></div>
<div class="b" style="left:0px;top:477.5px;width:55px;height:1px;background:#e7e7e7;"></div>
<div class="b" style="left:55px;top:517.5px;width:858.5px;height:1px;background:#e2e2e2;"></div>
<div class="b" style="left:0px;top:517.5px;width:55px;height:1px;background:#e7e7e7;"></div>
<div class="b" style="left:55px;top:556.5px;width:858.5px;height:1px;background:#e2e2e2;"></div>
<div class="b" style="left:0px;top:556.5px;width:55px;height:1px;background:#e7e7e7;"></div>
<div class="b" style="left:55px;top:596.5px;width:858.5px;height:1px;background:#e2e2e2;"></div>
<div class="b" style="left:0px;top:596.5px;width:55px;height:1px;background:#e7e7e7;"></div>
<div class="b" style="left:55px;top:635.5px;width:858.5px;height:1px;background:#e2e2e2;"></div>
<div class="b" style="left:0px;top:635.5px;width:55px;height:1px;background:#e7e7e7;"></div>
<div class="b" style="left:55px;top:674.5px;width:858.5px;height:1px;background:#e2e2e2;"></div>
<div class="b" style="left:0px;top:674.5px;width:55px;height:1px;background:#e7e7e7;"></div>
<div class="b" style="left:55px;top:714.5px;width:858.5px;height:1px;background:#e2e2e2;"></div>
<div class="b" style="left:0px;top:714.5px;width:55px;height:1px;background:#e7e7e7;"></div>
<div class="b" style="left:55px;top:753.5px;width:858.5px;height:1px;background:#e2e2e2;"></div>
<div class="b" style="left:0px;top:753.5px;width:55px;height:1px;background:#e7e7e7;"></div>
<div class="b" style="left:55px;top:793.5px;width:858.5px;height:1px;background:#e2e2e2;"></div>
<div class="b" style="left:0px;top:793.5px;width:55px;height:1px;background:#e7e7e7;"></div>
<div class="b" style="left:55px;top:832.5px;width:858.5px;height:1px;background:#e2e2e2;"></div>
<div class="b" style="left:0px;top:832.5px;width:55px;height:1px;background:#e7e7e7;"></div>
<div class="b" style="left:55px;top:871.5px;width:858.5px;height:1px;background:#e2e2e2;"></div>
<div class="b" style="left:0px;top:871.5px;width:55px;height:1px;background:#e7e7e7;"></div>
<div class="b" style="left:55px;top:911.5px;width:858.5px;height:1px;background:#e2e2e2;"></div>
<div class="b" style="left:0px;top:911.5px;width:55px;height:1px;background:#e7e7e7;"></div>
<div class="b" style="left:55px;top:950.5px;width:858.5px;height:1px;background:#e2e2e2;"></div>
<div class="b" style="left:0px;top:950.5px;width:55px;height:1px;background:#e7e7e7;"></div>
<div class="b" style="left:55px;top:990.5px;width:858.5px;height:1px;background:#e2e2e2;"></div>
<div class="b" style="left:0px;top:990.5px;width:55px;height:1px;background:#e7e7e7;"></div>
<div class="b" style="left:55px;top:1029.5px;width:858.5px;height:1px;background:#e2e2e2;"></div>
<div class="b" style="left:0px;top:1029.5px;width:55px;height:1px;background:#e7e7e7;"></div>
<div class="b" style="left:55px;top:1068.5px;width:858.5px;height:1px;background:#e2e2e2;"></div>
<div class="b" style="left:0px;top:1068.5px;width:55px;height:1px;background:#e7e7e7;"></div>
<div class="b" style="left:55px;top:1108.5px;width:858.5px;height:1px;background:#e2e2e2;"></div>
<div class="b" style="left:0px;top:1108.5px;width:55px;height:1px;background:#e7e7e7;"></div>
<div class="b" style="left:55px;top:1147.5px;width:858.5px;height:1px;background:#e2e2e2;"></div>
<div class="b" style="left:0px;top:1147.5px;width:55px;height:1px;background:#e7e7e7;"></div>
<div class="b" style="left:55px;top:1187.5px;width:858.5px;height:1px;background:#e2e2e2;"></div>
<div class="b" style="left:0px;top:1187.5px;width:55px;height:1px;background:#e7e7e7;"></div>
<div class="b" style="left:55px;top:1226.5px;width:858.5px;height:1px;background:#e2e2e2;"></div>
<div class="b" style="left:0px;top:1226.5px;width:55px;height:1px;background:#e7e7e7;"></div>
<div class="b" style="left:55px;top:1265.5px;width:858.5px;height:1px;background:#e2e2e2;"></div>
<div class="b" style="left:0px;top:1265.5px;width:55px;height:1px;background:#e7e7e7;"></div>
<div class="b" style="left:394.1px;top:399px;width:1px;height:877px;background:#e2e2e2;"></div>
<div class="b" style="left:779.3px;top:399px;width:1px;height:877px;background:#e2e2e2;"></div>
<div class="b" style="left:913.0px;top:399px;width:1px;height:877px;background:#e2e2e2;"></div>
<div class="b" style="left:641.5px;top:399px;width:1.5px;height:877px;background:#8ea9db;"></div>
<span class="t" style="left:217.00px;top:368.28px;font-size:27.2px;color:#217346;transform:scaleX(0.8670);">A</span>
<span class="t" style="left:512.00px;top:368.28px;font-size:27.2px;color:#444;transform:scaleX(0.7740);">B</span>
<span class="t" style="left:702.00px;top:368.28px;font-size:27.2px;color:#444;transform:scaleX(0.8987);">C</span>
<span class="t" style="left:840.60px;top:368.28px;font-size:27.2px;color:#444;transform:scaleX(0.8885);">D</span>
<span class="t" style="left:60.90px;top:407.51px;font-size:27.4px;color:#000;transform:scaleX(1.0243);-webkit-text-stroke:0.25px #000;">altair</span>
<span class="t" style="left:399.30px;top:407.51px;font-size:27.4px;color:#000;transform:scaleX(1.0104);-webkit-text-stroke:0.25px #000;">5.0.1</span>
<span class="t" style="left:20.31px;top:407.84px;font-size:27px;color:#217346;transform:scaleX(1.0);">1</span>
<span class="t" style="left:60.90px;top:446.91px;font-size:27.4px;color:#000;transform:scaleX(0.9620);-webkit-text-stroke:0.25px #000;">anyio</span>
<span class="t" style="left:399.30px;top:446.91px;font-size:27.4px;color:#000;transform:scaleX(1.0104);-webkit-text-stroke:0.25px #000;">4.2.0</span>
<span class="t" style="left:20.31px;top:447.24px;font-size:27px;color:#4a4a4a;transform:scaleX(1.0);">2</span>
<span class="t" style="left:60.90px;top:486.31px;font-size:27.4px;color:#000;transform:scaleX(1.0045);-webkit-text-stroke:0.25px #000;">argon2-cffi</span>
<span class="t" style="left:399.30px;top:486.31px;font-size:27.4px;color:#000;transform:scaleX(1.0122);-webkit-text-stroke:0.25px #000;">21.3.0</span>
<span class="t" style="left:20.31px;top:486.64px;font-size:27px;color:#4a4a4a;transform:scaleX(1.0);">3</span>
<span class="t" style="left:60.90px;top:525.71px;font-size:27.4px;color:#000;transform:scaleX(1.0039);-webkit-text-stroke:0.25px #000;">argon2-cffi-bindings</span>
<span class="t" style="left:399.30px;top:525.71px;font-size:27.4px;color:#000;transform:scaleX(1.0122);-webkit-text-stroke:0.25px #000;">21.2.0</span>
<span class="t" style="left:20.31px;top:526.04px;font-size:27px;color:#4a4a4a;transform:scaleX(1.0);">4</span>
<span class="t" style="left:60.90px;top:565.11px;font-size:27.4px;color:#000;transform:scaleX(0.9836);-webkit-text-stroke:0.25px #000;">astropy</span>
<span class="t" style="left:399.30px;top:565.11px;font-size:27.4px;color:#000;transform:scaleX(1.0104);-webkit-text-stroke:0.25px #000;">6.1.0</span>
<span class="t" style="left:20.31px;top:565.44px;font-size:27px;color:#4a4a4a;transform:scaleX(1.0);">5</span>
<span class="t" style="left:60.90px;top:604.51px;font-size:27.4px;color:#000;transform:scaleX(0.9857);-webkit-text-stroke:0.25px #000;">astropy-iers-data</span>
<span class="t" style="left:399.30px;top:604.51px;font-size:27.4px;color:#000;transform:scaleX(1.0297);-webkit-text-stroke:0.25px #000;">0.2024.6.3.0.31.14</span>
<span class="t" style="left:20.31px;top:604.84px;font-size:27px;color:#4a4a4a;transform:scaleX(1.0);">6</span>
<span class="t" style="left:60.90px;top:643.91px;font-size:27.4px;color:#000;transform:scaleX(0.9985);-webkit-text-stroke:0.25px #000;">asttokens</span>
<span class="t" style="left:399.30px;top:643.91px;font-size:27.4px;color:#000;transform:scaleX(1.0104);-webkit-text-stroke:0.25px #000;">2.0.5</span>
<span class="t" style="left:20.31px;top:644.24px;font-size:27px;color:#4a4a4a;transform:scaleX(1.0);">7</span>
<span class="t" style="left:60.90px;top:683.31px;font-size:27.4px;color:#000;transform:scaleX(0.9828);-webkit-text-stroke:0.25px #000;">async-lru</span>
<span class="t" style="left:399.30px;top:683.31px;font-size:27.4px;color:#000;transform:scaleX(1.0153);-webkit-text-stroke:0.25px #000;">2.0.4</span>
<span class="t" style="left:20.31px;top:683.64px;font-size:27px;color:#4a4a4a;transform:scaleX(1.0);">8</span>
<span class="t" style="left:60.90px;top:722.71px;font-size:27.4px;color:#000;transform:scaleX(1.0001);-webkit-text-stroke:0.25px #000;">attrs</span>
<span class="t" style="left:399.30px;top:722.71px;font-size:27.4px;color:#000;transform:scaleX(1.0122);-webkit-text-stroke:0.25px #000;">23.1.0</span>
<span class="t" style="left:20.31px;top:723.04px;font-size:27px;color:#4a4a4a;transform:scaleX(1.0);">9</span>
<span class="t" style="left:61.40px;top:762.11px;font-size:27.4px;color:#000;transform:scaleX(0.9523);-webkit-text-stroke:0.25px #000;">Babel</span>
<span class="t" style="left:399.30px;top:762.11px;font-size:27.4px;color:#000;transform:scaleX(1.0402);-webkit-text-stroke:0.25px #000;">2.11.0</span>
<span class="t" style="left:12.82px;top:762.44px;font-size:27px;color:#4a4a4a;transform:scaleX(1.0);">10</span>
<span class="t" style="left:60.90px;top:801.51px;font-size:27.4px;color:#000;transform:scaleX(1.0155);-webkit-text-stroke:0.25px #000;">beautifulsoup4</span>
<span class="t" style="left:399.30px;top:801.51px;font-size:27.4px;color:#000;transform:scaleX(1.0122);-webkit-text-stroke:0.25px #000;">4.12.3</span>
<span class="t" style="left:13.76px;top:801.84px;font-size:27px;color:#4a4a4a;transform:scaleX(1.0);">11</span>
<span class="t" style="left:60.90px;top:840.91px;font-size:27.4px;color:#000;transform:scaleX(1.0013);-webkit-text-stroke:0.25px #000;">bleach</span>
<span class="t" style="left:399.30px;top:840.91px;font-size:27.4px;color:#000;transform:scaleX(1.0104);-webkit-text-stroke:0.25px #000;">4.1.0</span>
<span class="t" style="left:12.82px;top:841.24px;font-size:27px;color:#4a4a4a;transform:scaleX(1.0);">12</span>
<span class="t" style="left:60.90px;top:880.31px;font-size:27.4px;color:#000;transform:scaleX(0.9804);-webkit-text-stroke:0.25px #000;">bokeh</span>
<span class="t" style="left:399.30px;top:880.31px;font-size:27.4px;color:#000;transform:scaleX(1.0104);-webkit-text-stroke:0.25px #000;">3.4.1</span>
<span class="t" style="left:12.82px;top:880.64px;font-size:27px;color:#4a4a4a;transform:scaleX(1.0);">13</span>
<span class="t" style="left:61.40px;top:919.71px;font-size:27.4px;color:#000;transform:scaleX(1.0071);-webkit-text-stroke:0.25px #000;">Bottleneck</span>
<span class="t" style="left:400.60px;top:919.71px;font-size:27.4px;color:#000;transform:scaleX(0.9891);-webkit-text-stroke:0.25px #000;">1.3.7</span>
<span class="t" style="left:12.82px;top:920.04px;font-size:27px;color:#4a4a4a;transform:scaleX(1.0);">14</span>
<span class="t" style="left:61.40px;top:959.11px;font-size:27.4px;color:#000;transform:scaleX(0.9860);-webkit-text-stroke:0.25px #000;">Brotli</span>
<span class="t" style="left:400.60px;top:959.11px;font-size:27.4px;color:#000;transform:scaleX(0.9940);-webkit-text-stroke:0.25px #000;">1.0.9</span>
<span class="t" style="left:12.82px;top:959.44px;font-size:27px;color:#4a4a4a;transform:scaleX(1.0);">15</span>
<span class="t" style="left:60.90px;top:998.51px;font-size:27.4px;color:#000;transform:scaleX(1.0155);-webkit-text-stroke:0.25px #000;">certifi</span>
<span class="t" style="left:399.30px;top:998.51px;font-size:27.4px;color:#000;transform:scaleX(1.0157);-webkit-text-stroke:0.25px #000;">2024.6.2</span>
<span class="t" style="left:12.82px;top:998.84px;font-size:27px;color:#4a4a4a;transform:scaleX(1.0);">16</span>
<span class="t" style="left:60.90px;top:1037.91px;font-size:27.4px;color:#000;transform:scaleX(1.0341);-webkit-text-stroke:0.25px #000;">cffi</span>
<span class="t" style="left:400.60px;top:1037.91px;font-size:27.4px;color:#000;transform:scaleX(0.9951);-webkit-text-stroke:0.25px #000;">1.16.0</span>
<span class="t" style="left:12.82px;top:1038.24px;font-size:27px;color:#4a4a4a;transform:scaleX(1.0);">17</span>
<span class="t" style="left:60.90px;top:1077.31px;font-size:27.4px;color:#000;transform:scaleX(1.0032);-webkit-text-stroke:0.25px #000;">charset-normalizer</span>
<span class="t" style="left:399.30px;top:1077.31px;font-size:27.4px;color:#000;transform:scaleX(1.0153);-webkit-text-stroke:0.25px #000;">2.0.4</span>
<span class="t" style="left:12.82px;top:1077.64px;font-size:27px;color:#4a4a4a;transform:scaleX(1.0);">18</span>
<span class="t" style="left:60.90px;top:1116.71px;font-size:27.4px;color:#000;transform:scaleX(1.0406);-webkit-text-stroke:0.25px #000;">click</span>
<span class="t" style="left:399.30px;top:1116.71px;font-size:27.4px;color:#000;transform:scaleX(1.0153);-webkit-text-stroke:0.25px #000;">8.1.7</span>
<span class="t" style="left:12.82px;top:1117.04px;font-size:27px;color:#4a4a4a;transform:scaleX(1.0);">19</span>
<span class="t" style="left:60.90px;top:1156.11px;font-size:27.4px;color:#000;transform:scaleX(1.0340);-webkit-text-stroke:0.25px #000;">cloudpickle</span>
<span class="t" style="left:399.30px;top:1156.11px;font-size:27.4px;color:#000;transform:scaleX(1.0104);-webkit-text-stroke:0.25px #000;">2.2.1</span>
<span class="t" style="left:12.82px;top:1156.44px;font-size:27px;color:#4a4a4a;transform:scaleX(1.0);">20</span>
<span class="t" style="left:60.90px;top:1195.51px;font-size:27.4px;color:#000;transform:scaleX(1.0334);-webkit-text-stroke:0.25px #000;">colorcet</span>
<span class="t" style="left:399.30px;top:1195.51px;font-size:27.4px;color:#000;transform:scaleX(1.0104);-webkit-text-stroke:0.25px #000;">3.1.0</span>
<span class="t" style="left:12.82px;top:1195.84px;font-size:27px;color:#4a4a4a;transform:scaleX(1.0);">21</span>
<span class="t" style="left:60.90px;top:1234.91px;font-size:27.4px;color:#000;transform:scaleX(1.0211);-webkit-text-stroke:0.25px #000;">comm</span>
<span class="t" style="left:399.30px;top:1234.91px;font-size:27.4px;color:#000;transform:scaleX(1.0104);-webkit-text-stroke:0.25px #000;">0.2.1</span>
<span class="t" style="left:12.82px;top:1235.24px;font-size:27px;color:#4a4a4a;transform:scaleX(1.0);">22</span>
<div class="b" style="left:53.5px;top:398.5px;width:343px;height:42.6px;border:2.2px solid #217346;"></div>
<div class="b" style="left:390.6px;top:435.3px;width:7.5px;height:7.5px;background:#217346;border:1px solid #fff;"></div>
<div class="b" style="left:913.5px;top:361px;width:32.5px;height:916px;background:#e7eaf0;"></div>
<div class="b" style="left:915.5px;top:361px;width:28px;height:916px;background:#f5f5f5;border-radius:14px;"></div>
<svg class="b" style="left:920px;top:367px;" width="20" height="16" viewBox="0 0 20 16" fill="none"><path d="M9.700 4 L15.200 11.500 H4.200 Z" fill="#737373" stroke="#737373" stroke-linejoin="round" stroke-width="2.600"/></svg>
<div class="b" style="left:922.9px;top:388.6px;width:13.3px;height:107px;background:#737373;border-radius:6.650px;"></div>
<svg class="b" style="left:920px;top:1256px;" width="20" height="16" viewBox="0 0 20 16" fill="none"><path d="M10 12 L15.500 4.500 H4.500 Z" fill="#707070" stroke="#707070" stroke-linejoin="round" stroke-width="2.600"/></svg>
<div class="b" style="left:643px;top:399px;width:8px;height:877px;background:linear-gradient(to right,rgba(0,0,0,.055),rgba(0,0,0,0));"></div>
<div class="b" style="left:0px;top:1276px;width:946px;height:52px;background:linear-gradient(to right,#e9edf2,#e6e9f0);"></div>
<svg class="b" style="left:30px;top:1288px;" width="18" height="24" viewBox="0 0 18 24" fill="none"><path d="M12.700 5.200 L5 12.300 L12.700 19.400" stroke="#8a8a8a" stroke-width="1.500" stroke-linecap="round" stroke-linejoin="round"/></svg>
<svg class="b" style="left:83px;top:1288px;" width="18" height="24" viewBox="0 0 18 24" fill="none"><path d="M5.200 5.200 L12.900 12.300 L5.200 19.400" stroke="#8a8a8a" stroke-width="1.500" stroke-linecap="round" stroke-linejoin="round"/></svg>
<div class="b" style="left:165px;top:1276px;width:12px;height:12px;background:#fff;"></div>
<div class="b" style="left:165px;top:1276px;width:12px;height:12px;background:#e9edf2;border-radius:0 7px 0 0;"></div>
<div class="b" style="left:272px;top:1276px;width:12px;height:12px;background:#fff;"></div>
<div class="b" style="left:272px;top:1276px;width:12px;height:12px;background:#e9edf2;border-radius:7px 0 0 0;"></div>
<div class="b" style="left:177px;top:1276px;width:95px;height:46.4px;background:#fff;border-radius:0 0 8px 8px;box-shadow:0 1px 1.5px rgba(0,0,0,.10);"></div>
<span class="t" style="left:191.00px;top:1286.67px;font-size:22.6px;color:#222;transform:scaleX(0.9324);-webkit-text-stroke:0.5px #222;">Sheet1</span>
<div class="b" style="left:190.4px;top:1313.4px;width:68px;height:3.5px;background:#107c41;border-radius:1px;"></div>
<div class="b" style="left:278.3px;top:1287px;width:1.2px;height:29.5px;background:#c4c4c4;"></div>
<svg class="b" style="left:347px;top:1290px;" width="22" height="22" viewBox="0 0 22 22" fill="none"><path d="M10.900 2 V19.500 M2 10.700 H19.800" stroke="#333" stroke-width="1.700" stroke-linecap="round"/></svg>
<div class="b" style="left:572.4px;top:1293.6px;width:3.6px;height:3.6px;background:#333;border-radius:0.5px;"></div>
<div class="b" style="left:572.4px;top:1300.5px;width:3.6px;height:3.6px;background:#333;border-radius:0.5px;"></div>
<div class="b" style="left:572.4px;top:1307.3px;width:3.6px;height:3.6px;background:#333;border-radius:0.5px;"></div>
<div class="b" style="left:600.6px;top:1287px;width:315px;height:28px;background:#f5f5f5;border-radius:14px;"></div>
<svg class="b" style="left:606px;top:1291px;" width="18" height="20" viewBox="0 0 18 20" fill="none"><path d="M4.500 10 L12.500 4.500 V15.500 Z" fill="#707070" stroke="#707070" stroke-width="2.400" stroke-linejoin="round"/></svg>
<svg class="b" style="left:893px;top:1291px;" width="18" height="20" viewBox="0 0 18 20" fill="none"><path d="M13.200 10 L5.200 4.500 V15.500 Z" fill="#707070" stroke="#707070" stroke-width="2.400" stroke-linejoin="round"/></svg>
<div class="b" style="left:628.4px;top:1294px;width:131.2px;height:13.7px;background:#737373;border-radius:6.850px;"></div>
<div class="b" style="left:0px;top:1327.6px;width:2048px;height:38px;background:#f5f5f5;"></div>
<span class="t" style="left:18.50px;top:1339.21px;font-size:17px;color:#333;transform:scaleX(0.9261);">Ready</span>
<svg class="b" style="left:93px;top:1333px;" width="30" height="28" viewBox="0 0 30 28" fill="none"><circle cx="12.500" cy="5.800" r="3" stroke="#333" stroke-width="1.400"/>
<path d="M2.700 10.200 C4 13.500 8.500 12.800 12.500 13.200 C16.500 12.800 20.800 12.500 22.200 8.300 M9.500 13.300 V19.500 C9.500 23.500 7.500 25.300 5 23.500 M15.400 13.300 V16.800" stroke="#333" stroke-width="1.400" stroke-linecap="round" stroke-linejoin="round"/>
<path d="M13.400 20.300 L18 24.800 L26 16.300" stroke="#333" stroke-width="1.500" stroke-linecap="round" stroke-linejoin="round"/></svg>
<div class="b" style="left:1560.5px;top:1330px;width:65.5px;height:35px;background:#dddddd;"></div>
<svg class="b" style="left:1581px;top:1335px;" width="24" height="23" viewBox="0 0 24 23" fill="none"><path d="M2 2 H22.300 V21.500 H2 Z M2 8.500 H22.300 M2 15 H22.300 M8.800 2 V21.500 M15.500 2 V21.500" stroke="#222" stroke-width="1.900"/></svg>
<svg class="b" style="left:1646px;top:1335px;" width="27" height="23" viewBox="0 0 27 23" fill="none"><rect x="2" y="1.800" width="22.800" height="19.800" stroke="#222" stroke-width="1.700"/><rect x="6.800" y="5.800" width="13.200" height="11.800" stroke="#222" stroke-width="1.500"/><path d="M10 9 H17 M10 11.700 H17 M10 14.400 H17" stroke="#222" stroke-width="1.200"/></svg>
<svg class="b" style="left:1712px;top:1335px;" width="26" height="23" viewBox="0 0 26 23" fill="none"><path d="M2 2 H24 V21.500 H2 Z M8.500 2 V12.500 H24 M14.800 2 V12.500" stroke="#222" stroke-width="1.800"/></svg>
<div class="b" style="left:1767.5px;top:1345.4px;width:12.5px;height:1.5px;background:#555;"></div>
<div class="b" style="left:1789.5px;top:1345.3px;width:162.5px;height:1.7px;background:#666;"></div>
<div class="b" style="left:1867px;top:1338px;width:8.3px;height:18.2px;background:#5c5c5c;border-radius:1px;"></div>
<svg class="b" style="left:1960px;top:1339px;" width="15" height="15" viewBox="0 0 15 15" fill="none"><path d="M7.500 1.200 V13.800 M1.200 7.500 H13.800" stroke="#555" stroke-width="1.500"/></svg>
<span class="t" style="left:1996.00px;top:1339.81px;font-size:17px;color:#333;transform:scaleX(0.9076);">100%</span>
<div class="b" style="left:945.3px;top:361px;width:1037px;height:967px;background:#f0f0f0;border-left:1px solid #d9dbe2;"></div>
<div class="b" style="left:1982.3px;top:361px;width:66px;height:966px;background:#fafafa;"></div>
<span class="t" style="left:962.70px;top:381.98px;font-size:24px;color:#222;transform:scaleX(1.0061);-webkit-text-stroke:0.65px #222;">Python Editor</span>
<svg class="b" style="left:1884px;top:385.5px;" width="25.5" height="15.0" viewBox="0 0 25.5 15.0" fill="none"><path d="M2.80 2.80 L12.75 12.04 L22.70 2.80" stroke="#333" stroke-width="1.6" stroke-linecap="round" stroke-linejoin="round"/></svg>
<svg class="b" style="left:1939px;top:382px;" width="22" height="22" viewBox="0 0 22 22" fill="none"><path d="M2.500 2.500 L19.500 19.500 M19.500 2.500 L2.500 19.500" stroke="#333" stroke-width="1.600" stroke-linecap="round"/></svg>
<svg class="b" style="left:2002.3px;top:380.7px;" width="26" height="26.2" viewBox="0 0 111.500 112.500" fill="none"><path d="M54.900 0 C50.300 0 46 .400 42.100 1.100 C30.800 3.100 28.700 7.300 28.700 15 V25.200 H55.500 V28.600 H18.700 C10.900 28.600 4.100 33.300 2 42.200 C-.500 52.500 -.600 58.900 2 69.700 C3.900 77.600 8.400 83.300 16.200 83.300 H25.400 V71 C25.400 62.100 33.100 54.300 42.200 54.300 H68.900 C76.400 54.300 82.300 48.100 82.300 40.700 V15 C82.300 7.700 76.200 2.300 68.900 1.100 C64.300 .300 59.500 0 54.900 0 Z M40.400 8.200 C43.200 8.200 45.400 10.500 45.400 13.300 C45.400 16.100 43.200 18.300 40.400 18.300 C37.600 18.300 35.400 16.100 35.400 13.300 C35.400 10.500 37.600 8.200 40.400 8.200 Z" fill="#2a8fd6"/>
<path d="M85.600 28.600 V40.600 C85.600 49.900 77.700 57.700 68.800 57.700 H42.100 C34.800 57.700 28.700 64 28.700 71.300 V97 C28.700 104.300 35 108.600 42.100 110.700 C50.600 113.200 58.800 113.700 68.900 110.700 C75.600 108.700 82.300 104.800 82.300 97 V86.800 H55.500 V83.400 H95.700 C103.500 83.400 106.400 78 109.100 69.800 C111.900 61.400 111.800 53.300 109.100 42.300 C107.200 34.500 103.500 28.700 95.700 28.700 Z M70.600 93.700 C73.400 93.700 75.600 95.900 75.600 98.700 C75.600 101.500 73.400 103.800 70.600 103.800 C67.800 103.800 65.600 101.500 65.600 98.700 C65.600 95.900 67.800 93.700 70.600 93.700 Z" fill="#2a8fd6"/></svg>
<div class="b" style="left:1982.7px;top:426.7px;width:65.3px;height:65.3px;background:#e5e5e5;border:1.7px solid #666;border-radius:8px;"></div>
<svg class="b" style="left:1998px;top:442px;" width="36" height="34" viewBox="0 0 36 34" fill="none"><text x="3" y="15.600" font-size="16" fill="#2b8fd9" font-family="Liberation Sans,sans-serif" textLength="17.800" lengthAdjust="spacingAndGlyphs">PY</text>
<path d="M26.800 10.800 A2 2 0 0 1 30 14 L15.500 28 L10.600 29.800 L12.400 24.800 Z M25 12.600 L28.200 15.800 M12.400 24.800 L15.500 28" stroke="#333" stroke-width="1.400" stroke-linejoin="round"/></svg>
<div class="b" style="left:966.3px;top:427.3px;width:254px;height:50.7px;background:#fff;border:1px solid #d0d0d0;border-radius:6px;box-shadow:0 1px 1.5px rgba(0,0,0,.06);"></div>
<svg class="b" style="left:979px;top:439px;" width="30" height="28" viewBox="0 0 30 28" fill="none"><path d="M2.200 3.300 H26.800 L17.300 14 V24.300 H11.700 V14 Z" stroke="#107c41" stroke-width="1.600" stroke-linejoin="miter"/></svg>
<span class="t" style="left:1021.00px;top:443.50px;font-size:21.5px;color:#333;transform:scaleX(1.0407);">All Python cells</span>
<svg class="b" style="left:1184.5px;top:445.5px;" width="24.0" height="14.0" viewBox="0 0 24.0 14.0" fill="none"><path d="M2.75 2.75 L12.00 11.10 L21.25 2.75" stroke="#444" stroke-width="1.5" stroke-linecap="round" stroke-linejoin="round"/></svg>
<div class="b" style="left:966px;top:495.7px;width:971px;height:327.5px;background:#fff;border:1px solid #d6d6d6;border-radius:6px;"></div>
<div class="b" style="left:967px;top:496.7px;width:969px;height:58.7px;background:#f5f5f5;border-radius:5px 5px 0 0;"></div>
<span class="t" style="left:1008.70px;top:519.22px;font-size:21px;color:#333;transform:scaleX(0.9446);">A1</span>
<svg class="b" style="left:1684px;top:514px;" width="26" height="31" viewBox="0 0 26 31" fill="none"><path d="M3 3 V10.500 H10.500" stroke="#999" stroke-width="1.500" stroke-linecap="round" stroke-linejoin="round"/>
<path d="M3.500 10 C7 4 14 2 19 5.500 C24 9.500 23 15.500 19 19 L10.500 27.500" stroke="#999" stroke-width="1.500" stroke-linecap="round" stroke-linejoin="round"/></svg>
<svg class="b" style="left:1715px;top:521.5px;" width="16" height="10.0" viewBox="0 0 16 10.0" fill="none"><path d="M2.65 2.65 L8.00 7.22 L13.35 2.65" stroke="#c4c4c4" stroke-width="1.3" stroke-linecap="round" stroke-linejoin="round"/></svg>
<svg class="b" style="left:1759px;top:514px;" width="26" height="25" viewBox="0 0 26 25" fill="none"><path d="M1.500 1.500 H21 L24.500 5 V23.500 H1.500 Z" stroke="#a0a0a0" stroke-width="1.500" stroke-linejoin="round"/><path d="M6.500 1.500 V8.500 H18.500 V1.500 M6 23.500 V15 H19.500 V23.500 M10 19 V23" stroke="#a0a0a0" stroke-width="1.400"/></svg>
<svg class="b" style="left:1813px;top:513.5px;" width="28.0" height="26.0" viewBox="0 0 28 26" fill="none"><path d="M8 9.500 C3 11 1.500 16.500 4.500 19.500 C6.500 21.500 9.500 21.500 13 21.200 M9.800 17.500 L14 21.200 L9.800 25" stroke="#1e88e5" stroke-width="1.600" stroke-linecap="round" stroke-linejoin="round"/>
<text x="9" y="11.300" font-size="13.200" fill="#222" stroke="#222" stroke-width="0.300" font-family="Liberation Sans,sans-serif" textLength="18" lengthAdjust="spacingAndGlyphs">123</text></svg>
<svg class="b" style="left:1845.5px;top:521.5px;" width="16.0" height="10.0" viewBox="0 0 16.0 10.0" fill="none"><path d="M2.65 2.65 L8.00 7.22 L13.35 2.65" stroke="#5f6f80" stroke-width="1.3" stroke-linecap="round" stroke-linejoin="round"/></svg>
<svg class="b" style="left:1889px;top:513.5px;" width="28" height="27" viewBox="0 0 28 27" fill="none"><path d="M3 24.500 L25.500 3 M18 3 H25.500 V10.500 M3 17 V24.500 H10.500" stroke="#222" stroke-width="1.500" stroke-linecap="square" stroke-linejoin="miter"/></svg>
<svg class="b" style="left:1944px;top:495px;" width="18" height="13" viewBox="0 0 18 13" fill="none"><path d="M9 2.500 L15.500 11 H2.500 Z" fill="#bfbfbf" stroke="#bfbfbf" stroke-width="2" stroke-linejoin="round"/></svg>
<svg class="b" style="left:1944px;top:1223px;" width="18" height="13" viewBox="0 0 18 13" fill="none"><path d="M9 10.500 L15.500 2 H2.500 Z" fill="#bfbfbf" stroke="#bfbfbf" stroke-width="2" stroke-linejoin="round"/></svg>
<span class="t" style="left:999.30px;top:583.07px;font-size:23px;color:#237893;font-family:'Liberation Mono',monospace;transform:scaleX(0.9114);">1</span>
<span class="t" style="left:999.30px;top:612.47px;font-size:23px;color:#237893;font-family:'Liberation Mono',monospace;transform:scaleX(0.9114);">2</span>
<span class="t" style="left:999.30px;top:641.77px;font-size:23px;color:#237893;font-family:'Liberation Mono',monospace;transform:scaleX(0.9114);">3</span>
<span class="t" style="left:999.30px;top:700.97px;font-size:23px;color:#237893;font-family:'Liberation Mono',monospace;transform:scaleX(0.9114);">4</span>
<span class="t" style="left:999.30px;top:730.57px;font-size:23px;color:#0b216f;font-family:'Liberation Mono',monospace;transform:scaleX(0.9114);">5</span>
<span class="t" style="left:1055.20px;top:583.07px;font-size:23px;color:#af00db;font-family:'Liberation Mono',monospace;transform:scaleX(0.9114);">import</span>
<span class="t" style="left:1143.26px;top:583.07px;font-size:23px;color:#267f99;font-family:'Liberation Mono',monospace;transform:scaleX(0.9114);">subprocess</span>
<span class="t" style="left:1055.20px;top:641.77px;font-size:23px;color:#001080;font-family:'Liberation Mono',monospace;transform:scaleX(0.9114);">result</span>
<span class="t" style="left:1130.68px;top:641.77px;font-size:23px;color:#222;font-family:'Liberation Mono',monospace;transform:scaleX(0.9114);"> = </span>
<span class="t" style="left:1168.42px;top:641.77px;font-size:23px;color:#267f99;font-family:'Liberation Mono',monospace;transform:scaleX(0.9114);">subprocess</span>
<span class="t" style="left:1294.22px;top:641.77px;font-size:23px;color:#222;font-family:'Liberation Mono',monospace;transform:scaleX(0.9114);">.</span>
<span class="t" style="left:1306.80px;top:641.77px;font-size:23px;color:#795e26;font-family:'Liberation Mono',monospace;transform:scaleX(0.9114);">run</span>
<span class="t" style="left:1344.54px;top:641.77px;font-size:23px;color:#222;font-family:'Liberation Mono',monospace;transform:scaleX(0.9114);">([</span>
<span class="t" style="left:1369.70px;top:641.77px;font-size:23px;color:#a31515;font-family:'Liberation Mono',monospace;transform:scaleX(0.9114);">&#x27;pip&#x27;</span>
<span class="t" style="left:1432.60px;top:641.77px;font-size:23px;color:#222;font-family:'Liberation Mono',monospace;transform:scaleX(0.9114);">, </span>
<span class="t" style="left:1457.76px;top:641.77px;font-size:23px;color:#a31515;font-family:'Liberation Mono',monospace;transform:scaleX(0.9114);">&#x27;list&#x27;</span>
<span class="t" style="left:1533.24px;top:641.77px;font-size:23px;color:#222;font-family:'Liberation Mono',monospace;transform:scaleX(0.9114);">], </span>
<span class="t" style="left:1570.98px;top:641.77px;font-size:23px;color:#001080;font-family:'Liberation Mono',monospace;transform:scaleX(0.9114);">capture_output</span>
<span class="t" style="left:1747.10px;top:641.77px;font-size:23px;color:#222;font-family:'Liberation Mono',monospace;transform:scaleX(0.9114);">=</span>
<span class="t" style="left:1759.68px;top:641.77px;font-size:23px;color:#0000ff;font-family:'Liberation Mono',monospace;transform:scaleX(0.9114);">True</span>
<span class="t" style="left:1810.00px;top:641.77px;font-size:23px;color:#222;font-family:'Liberation Mono',monospace;transform:scaleX(0.9114);">,</span>
<span class="t" style="left:1055.20px;top:671.17px;font-size:23px;color:#001080;font-family:'Liberation Mono',monospace;transform:scaleX(0.9114);">text</span>
<span class="t" style="left:1105.52px;top:671.17px;font-size:23px;color:#222;font-family:'Liberation Mono',monospace;transform:scaleX(0.9114);">=</span>
<span class="t" style="left:1118.10px;top:671.17px;font-size:23px;color:#0000ff;font-family:'Liberation Mono',monospace;transform:scaleX(0.9114);">True</span>
<span class="t" style="left:1168.42px;top:671.17px;font-size:23px;color:#222;font-family:'Liberation Mono',monospace;transform:scaleX(0.9114);">)</span>
<span class="t" style="left:1055.20px;top:700.97px;font-size:23px;color:#001080;font-family:'Liberation Mono',monospace;transform:scaleX(0.9114);">lines</span>
<span class="t" style="left:1118.10px;top:700.97px;font-size:23px;color:#222;font-family:'Liberation Mono',monospace;transform:scaleX(0.9114);"> = </span>
<span class="t" style="left:1155.84px;top:700.97px;font-size:23px;color:#001080;font-family:'Liberation Mono',monospace;transform:scaleX(0.9114);">result</span>
<span class="t" style="left:1231.32px;top:700.97px;font-size:23px;color:#222;font-family:'Liberation Mono',monospace;transform:scaleX(0.9114);">.</span>
<span class="t" style="left:1243.90px;top:700.97px;font-size:23px;color:#001080;font-family:'Liberation Mono',monospace;transform:scaleX(0.9114);">stdout</span>
<span class="t" style="left:1319.38px;top:700.97px;font-size:23px;color:#222;font-family:'Liberation Mono',monospace;transform:scaleX(0.9114);">.</span>
<span class="t" style="left:1331.96px;top:700.97px;font-size:23px;color:#795e26;font-family:'Liberation Mono',monospace;transform:scaleX(0.9114);">splitlines</span>
<span class="t" style="left:1457.76px;top:700.97px;font-size:23px;color:#222;font-family:'Liberation Mono',monospace;transform:scaleX(0.9114);">()[</span>
<span class="t" style="left:1495.50px;top:700.97px;font-size:23px;color:#098658;font-family:'Liberation Mono',monospace;transform:scaleX(0.9114);">2</span>
<span class="t" style="left:1508.08px;top:700.97px;font-size:23px;color:#222;font-family:'Liberation Mono',monospace;transform:scaleX(0.9114);">:]</span>
<span class="t" style="left:1055.20px;top:730.57px;font-size:23px;color:#222;font-family:'Liberation Mono',monospace;transform:scaleX(0.9114);">[</span>
<span class="t" style="left:1067.78px;top:730.57px;font-size:23px;color:#267f99;font-family:'Liberation Mono',monospace;transform:scaleX(0.9114);">tuple</span>
<span class="t" style="left:1130.68px;top:730.57px;font-size:23px;color:#222;font-family:'Liberation Mono',monospace;transform:scaleX(0.9114);">(</span>
<span class="t" style="left:1143.26px;top:730.57px;font-size:23px;color:#001080;font-family:'Liberation Mono',monospace;transform:scaleX(0.9114);">line</span>
<span class="t" style="left:1193.58px;top:730.57px;font-size:23px;color:#222;font-family:'Liberation Mono',monospace;transform:scaleX(0.9114);">.</span>
<span class="t" style="left:1206.16px;top:730.57px;font-size:23px;color:#795e26;font-family:'Liberation Mono',monospace;transform:scaleX(0.9114);">split</span>
<span class="t" style="left:1269.06px;top:730.57px;font-size:23px;color:#222;font-family:'Liberation Mono',monospace;transform:scaleX(0.9114);">()[:</span>
<span class="t" style="left:1319.38px;top:730.57px;font-size:23px;color:#098658;font-family:'Liberation Mono',monospace;transform:scaleX(0.9114);">2</span>
<span class="t" style="left:1331.96px;top:730.57px;font-size:23px;color:#222;font-family:'Liberation Mono',monospace;transform:scaleX(0.9114);">]) </span>
<span class="t" style="left:1369.70px;top:730.57px;font-size:23px;color:#af00db;font-family:'Liberation Mono',monospace;transform:scaleX(0.9114);">for</span>
<span class="t" style="left:1420.02px;top:730.57px;font-size:23px;color:#001080;font-family:'Liberation Mono',monospace;transform:scaleX(0.9114);">line</span>
<span class="t" style="left:1482.92px;top:730.57px;font-size:23px;color:#af00db;font-family:'Liberation Mono',monospace;transform:scaleX(0.9114);">in</span>
<span class="t" style="left:1520.66px;top:730.57px;font-size:23px;color:#001080;font-family:'Liberation Mono',monospace;transform:scaleX(0.9114);">lines</span>
<span class="t" style="left:1583.56px;top:730.57px;font-size:23px;color:#222;font-family:'Liberation Mono',monospace;transform:scaleX(0.9114);">]</span>
<div class="b" style="left:972.5px;top:763.2px;width:958.5px;height:1px;background:#dcdcdc;"></div>
<span class="t" style="left:981.20px;top:784.28px;font-size:25.2px;color:#222;transform:scaleX(0.9448);font-family:'Liberation Mono',monospace;">Spilled Values</span>
<svg class="b" style="left:1195.5px;top:781px;" width="18" height="28" viewBox="0 0 18 28" fill="none"><path d="M3 2.500 L15 14 L3 25.500" stroke="#333" stroke-width="1.600" stroke-linecap="round" stroke-linejoin="round"/></svg>
<div class="b" style="left:966.3px;top:1254px;width:970.5px;height:51px;background:#fff;border:1px solid #d0d0d0;border-radius:6px;box-shadow:0 1px 1.5px rgba(0,0,0,.06);"></div>
<svg class="b" style="left:981px;top:1266px;" width="29" height="29" viewBox="0 0 29 29" fill="none"><path d="M14.500 2 V27 M2 14.500 H27" stroke="#333" stroke-width="1.500" stroke-linecap="round"/></svg>
<span class="t" style="left:1022.00px;top:1269.80px;font-size:21.5px;color:#333;transform:scaleX(1.0636);">Add Python cell in A172</span>
</div></body></html>
